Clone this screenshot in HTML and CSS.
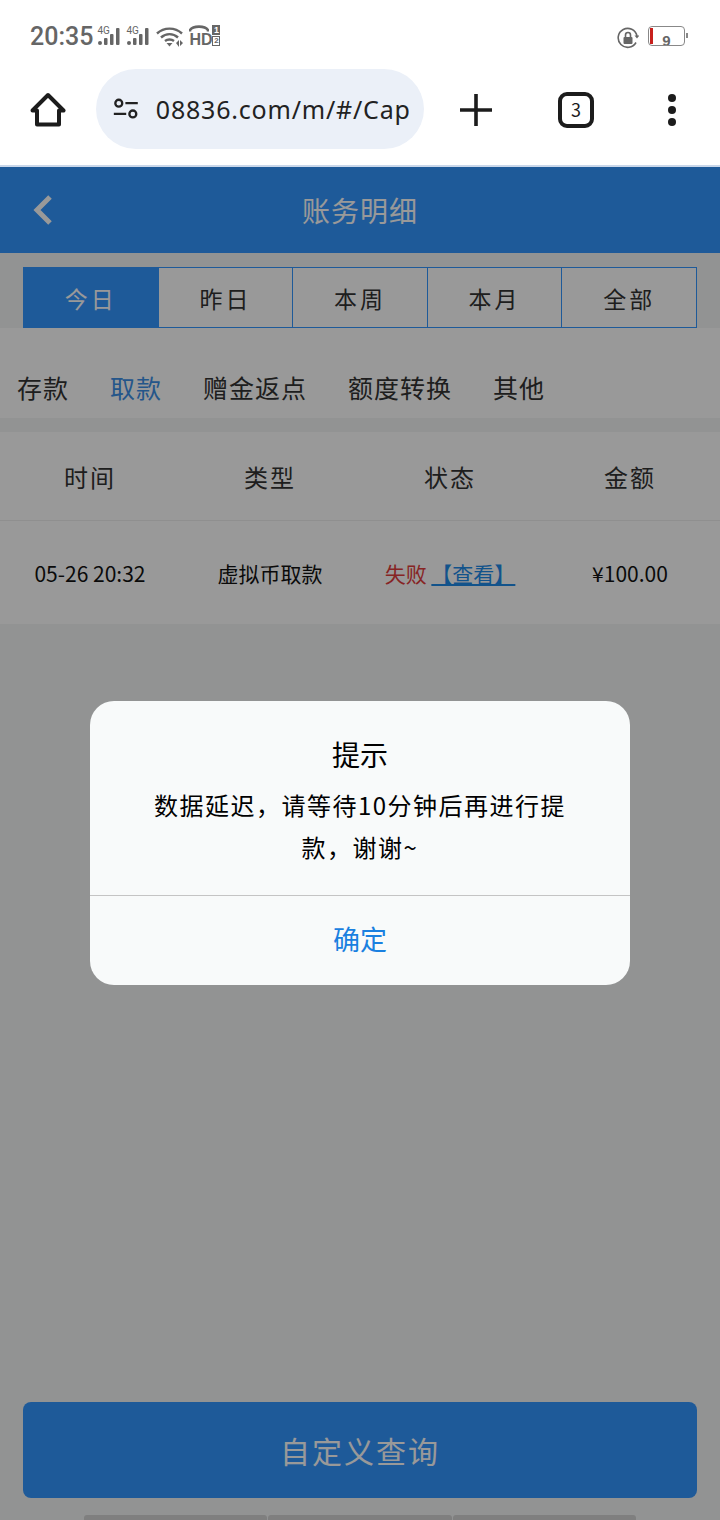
FILE: index.html
```html
<!DOCTYPE html>
<html lang="zh-CN">
<head>
    <meta charset="UTF-8">
    <title>账务明细</title>
    <link rel="stylesheet" href="styles.css">
</head>
<body>
    <div class="statusbar">
        <div class="status-left">
            <span class="time">20:35</span>
            <div class="signal">
                <span class="net">4G</span>
                <svg width="22" height="18" viewBox="0 0 22 18"><g fill="#666"><rect x="0" y="13" width="4" height="4" rx="2"/><rect x="6" y="10" width="3.5" height="7" rx="1"/><rect x="12" y="6" width="3.5" height="11" rx="1"/><rect x="18" y="0" width="3.5" height="17" rx="1"/></g></svg>
            </div>
            <div class="signal">
                <span class="net">4G</span>
                <svg width="22" height="18" viewBox="0 0 22 18"><g fill="#666"><rect x="0" y="13" width="4" height="4" rx="2"/><rect x="6" y="10" width="3.5" height="7" rx="1"/><rect x="12" y="6" width="3.5" height="11" rx="1"/><rect x="18" y="0" width="3.5" height="17" rx="1"/></g></svg>
            </div>
            <svg class="wifi" width="28" height="22" viewBox="0 0 28 22"><g fill="none" stroke="#666" stroke-width="2.4"><path d="M1 7.5C8 1 19 1 26 7.5"/><path d="M5 11.5C10 7 17 7 22 11.5"/><path d="M9 15C11.5 13 15.5 13 18 15"/></g><path d="M10.5 17h6l-3 3.5z" fill="#666"/><path d="M20 17l3-3v7zM24 14l3 3-3 3z" fill="#666"/></svg>
            <div class="hd">
                <svg class="hd-phone" width="20" height="7" viewBox="0 0 20 7"><path d="M1 6.5V5C4 0.5 16 0.5 19 5v1.500" fill="none" stroke="#666" stroke-width="2.6"/></svg>
                <span class="hd-text">HD</span>
                <div class="sims"><span>1</span><span class="sim-off">2</span></div>
            </div>
        </div>
        <div class="status-right">
            <svg width="22" height="22" viewBox="0 0 22 22"><path d="M19 15.500A9.500 9.500 0 1 1 20 9" fill="none" stroke="#666" stroke-width="1.600"/><path d="M17.500 8.500l5 0-2.500 3z" fill="#666"/><rect x="6.500" y="10" width="9" height="7" rx="1" fill="#666"/><path d="M8.500 10V8a2.500 2.500 0 0 1 5 0v2" fill="none" stroke="#666" stroke-width="1.600"/></svg>
            <div class="battery">
                <span class="battery-level"></span>
                <span class="battery-num">9</span>
            </div>
            <span class="battery-tip"></span>
        </div>
    </div>

    <div class="toolbar">
        <svg class="home" width="36" height="36" viewBox="0 0 36 36"><path d="M2.500 18.500L18 3l15.500 15.500h-4.500v14H7v-14z" fill="none" stroke="#1c1c1c" stroke-width="4" stroke-linejoin="round"/></svg>
        <div class="urlbar">
            <svg width="30" height="26" viewBox="0 0 30 26"><g fill="none" stroke="#222" stroke-width="2.800"><circle cx="7" cy="6" r="4.200"/><path d="M15 6h15"/><path d="M1 19h15"/><circle cx="24" cy="19" r="4.200"/></g></svg>
            <span class="url">08836.com/m/#/Capture</span>
        </div>
        <svg class="plus" width="32" height="32" viewBox="0 0 32 32"><path d="M0 16h32M16 0v32" stroke="#1c1c1c" stroke-width="3.600" stroke-linecap="round"/></svg>
        <div class="tabcount">3</div>
        <div class="menu"><span></span><span></span><span></span></div>
    </div>

    <div class="page">
        <div class="navbar">
            <svg class="back" width="20" height="32" viewBox="0 0 20 32"><path d="M17 3L4 16l13 13" fill="none" stroke="#fff" stroke-width="5"/></svg>
            <span class="nav-title">账务明细</span>
        </div>

        <div class="ranges">
            <div class="range active">今日</div>
            <div class="range">昨日</div>
            <div class="range">本周</div>
            <div class="range">本月</div>
            <div class="range">全部</div>
        </div>

        <div class="cats">
            <span>存款</span>
            <span class="cat-on">取款</span>
            <span>赠金返点</span>
            <span>额度转换</span>
            <span>其他</span>
        </div>

        <div class="records">
            <div class="rec-row rec-head">
                <span>时间</span>
                <span>类型</span>
                <span>状态</span>
                <span>金额</span>
            </div>
            <div class="rec-row rec-item">
                <span>05-26 20:32</span>
                <span>虚拟币取款</span>
                <span><em class="fail">失败</em> <a class="look">【查看】</a></span>
                <span>¥100.00</span>
            </div>
        </div>

        <button class="query">自定义查询</button>
        <div class="bottom-tabs"><span></span><span></span><span></span></div>

        <div class="mask"></div>
        <div class="dialog">
            <div class="dialog-body">
                <div class="dialog-title">提示</div>
                <div class="dialog-msg">数据延迟，请等待10分钟后再进行提款，谢谢~</div>
            </div>
            <div class="dialog-btn">确定</div>
        </div>
    </div>
</body>
</html>
```

FILE: styles.css
```css
* {
    box-sizing: border-box;
}

html, body {
    margin: 0;
    height: 1520px;
    overflow: hidden;
}

body {
    display: flex;
    flex-direction: column;
    background-color: #fff;
    font-family: "Noto Sans CJK SC", "Noto Sans", sans-serif;
    color: #222;
}

.statusbar {
    height: 69px;
    flex: none;
    display: flex;
    justify-content: space-between;
    padding: 21px 32px 0 30px;
}

.status-left {
    display: flex;
    align-items: flex-start;
    height: 30px;
}

.time {
    font-family: Roboto, sans-serif;
    font-size: 25px;
    font-weight: 500;
    line-height: 32px;
    color: #666;
    margin-right: 5px;
}

.signal {
    position: relative;
    width: 22px;
    height: 26px;
    margin: 5px 7px 0 0;
}

.signal svg {
    position: absolute;
    left: 0;
    top: 2px;
}

.net {
    position: absolute;
    left: -1px;
    top: 0;
    font-family: Roboto, sans-serif;
    font-size: 10px;
    line-height: 10px;
    color: #666;
}

.wifi {
    margin: 5px 5px 0 0;
}

.hd {
    position: relative;
    width: 31px;
    height: 24px;
    margin-top: 4px;
}

.hd-phone {
    position: absolute;
    left: 0;
    top: 0;
}

.hd-text {
    position: absolute;
    left: 0;
    top: 7px;
    font-family: "Liberation Sans", sans-serif;
    font-size: 16px;
    line-height: 16px;
    font-weight: 700;
    color: #666;
}

.sims {
    position: absolute;
    right: 0;
    top: 0;
    width: 8px;
    display: flex;
    flex-direction: column;
    gap: 1px;
}

.sims span {
    height: 10px;
    background-color: #666;
    color: #fff;
    font-family: "Liberation Sans", sans-serif;
    font-size: 9px;
    line-height: 10px;
    font-weight: 700;
    text-align: center;
}

.sims .sim-off {
    background-color: #fff;
    color: #666;
    border: 1px solid #666;
    line-height: 8px;
    font-size: 8px;
}

.status-right {
    display: flex;
    align-items: flex-start;
    padding-top: 5px;
}

.status-right svg {
    margin: 1px 9px 0 0;
}

.battery {
    position: relative;
    width: 37px;
    height: 20px;
    border: 1px solid #888;
    border-radius: 4px;
    text-align: center;
    overflow: hidden;
}

.battery-level {
    position: absolute;
    left: 1px;
    top: 1px;
    bottom: 1px;
    width: 3px;
    background-color: #c8201c;
}

.battery-num {
    font-family: "Liberation Sans", sans-serif;
    font-size: 15px;
    font-weight: 700;
    line-height: 18px;
    color: #666;
    letter-spacing: 0;
}

.battery-tip {
    width: 2px;
    height: 5px;
    margin: 7px 0 0 1px;
    background-color: #888;
}

.toolbar {
    height: 96px;
    flex: none;
    display: flex;
    align-items: center;
    padding: 0 44px 16px 30px;
}

.home {
    flex: none;
    margin-top: 2px;
}

.urlbar {
    width: 328px;
    height: 80px;
    flex: none;
    margin-left: 30px;
    border-radius: 40px;
    background-color: #ebf0f8;
    display: flex;
    align-items: center;
    gap: 18px;
    padding: 0 15px 0 17px;
    overflow: hidden;
}

.url {
    font-family: "Noto Sans", sans-serif;
    font-size: 25px;
    letter-spacing: 0.8px;
    color: #222;
    white-space: nowrap;
    overflow: hidden;
}

.plus {
    flex: none;
    margin: 2px 0 0 36px;
}

.tabcount {
    width: 36px;
    height: 36px;
    flex: none;
    margin: 2px 0 0 66px;
    border: 4px solid #1c1c1c;
    border-radius: 9px;
    font-size: 18px;
    line-height: 26px;
    text-align: center;
    color: #1c1c1c;
}

.menu {
    flex: none;
    margin: 2px 0 0 74px;
    display: flex;
    flex-direction: column;
    gap: 4px;
}

.menu span {
    width: 8px;
    height: 8px;
    border-radius: 50%;
    background-color: #1c1c1c;
}

.page {
    position: relative;
    flex: 1;
    display: flex;
    flex-direction: column;
    border-top: 2px solid #c9d7ea;
    background-color: #f4f5f5;
    overflow: hidden;
}

.navbar {
    height: 86px;
    flex: none;
    position: relative;
    display: flex;
    align-items: center;
    justify-content: center;
    background-color: #3396ff;
}

.back {
    position: absolute;
    left: 33px;
    top: 27px;
}

.nav-title {
    font-size: 28px;
    letter-spacing: 1px;
    color: #fff;
}

.ranges {
    flex: none;
    display: flex;
    margin: 14px 23px 0;
    height: 61px;
    background-color: #fff;
    border: 1px solid #3396ff;
}

.range {
    flex: 1;
    display: flex;
    align-items: center;
    justify-content: center;
    font-size: 23px;
    letter-spacing: 3px;
    color: #333;
    border-left: 1px solid #3396ff;
}

.range:first-child {
    border-left: none;
}

.range.active {
    background-color: #3396ff;
    color: #fff;
}

.cats {
    flex: none;
    height: 90px;
    display: flex;
    align-items: center;
    gap: 41px;
    padding: 28px 0 0 17px;
    background-color: #fff;
    font-size: 25px;
    letter-spacing: 1px;
    color: #333;
}

.cats span {
    line-height: 36px;
}

.cats .cat-on {
    color: #3d8fe6;
}

.records {
    flex: none;
    margin-top: 14px;
    background-color: #fff;
}

.rec-row {
    display: grid;
    grid-template-columns: repeat(4, 180px);
    align-items: center;
    text-align: center;
}

.rec-head {
    height: 89px;
    border-bottom: 1px solid #eee;
    font-size: 24px;
    letter-spacing: 2px;
    color: #333;
}

.rec-item {
    height: 103px;
    font-size: 21px;
    color: #111;
}

.fail {
    font-style: normal;
    color: #e23c3c;
}

.look {
    color: #1e8ae8;
    text-decoration: underline;
}

.query {
    margin: auto 23px 0;
    height: 96px;
    flex: none;
    border: none;
    border-radius: 8px;
    background-color: #3396ff;
    color: #fff;
    font-family: inherit;
    font-size: 30px;
    letter-spacing: 2px;
}

.bottom-tabs {
    flex: none;
    display: flex;
    gap: 1px;
    height: 5px;
    margin: 17px 84px 0;
}

.bottom-tabs span {
    flex: 1;
    background-color: #d4d4d4;
    border-radius: 3px 3px 0 0;
}

.mask {
    position: absolute;
    inset: 0;
    background-color: rgba(0, 0, 0, 0.4);
}

.dialog {
    position: absolute;
    left: 90px;
    top: 534px;
    width: 540px;
    height: 284px;
    display: flex;
    flex-direction: column;
    border-radius: 24px;
    background-color: #f8fafa;
    color: #000;
}

.dialog-body {
    height: 195px;
    padding: 32px 40px 0;
    text-align: center;
    border-bottom: 1px solid #c4c4c4;
}

.dialog-title {
    font-size: 28px;
    line-height: 42px;
}

.dialog-msg {
    font-size: 24px;
    line-height: 42px;
    margin-top: 9px;
    letter-spacing: 1.500px;
}

.dialog-btn {
    flex: 1;
    display: flex;
    align-items: center;
    justify-content: center;
    padding-bottom: 4px;
    font-size: 27px;
    color: #1a80e0;
}
```
